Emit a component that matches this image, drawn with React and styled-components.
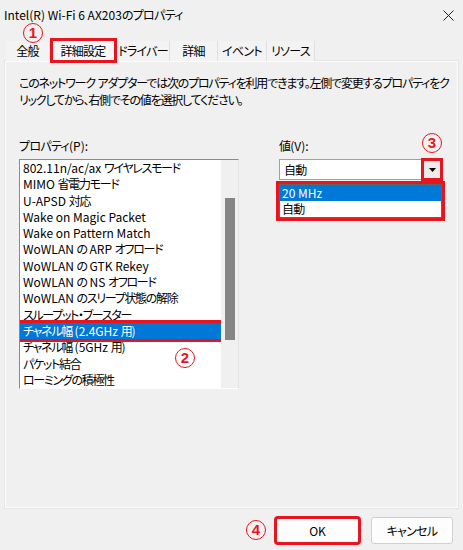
import styled, { createGlobalStyle } from 'styled-components';

const GlobalStyle = createGlobalStyle`
  html, body {
    margin: 0;
    padding: 0;
    background: #f0f0f0;
  }
  body {
    font-family: "Noto Sans CJK JP", "Noto Sans", sans-serif;
    font-feature-settings: "palt";
    font-size: 12px;
    color: #000;
  }
`;

const RED = '#e8141e';

const Page = styled.div`
  position: relative;
  width: 463px;
  height: 550px;
  background: #f0f0f0;
  display: flex;
  flex-direction: column;
  overflow: hidden;
`;

// kana / kanji runs are set tighter, like the narrow kana of the Windows UI font
const Jp = styled.span`
  letter-spacing: -0.7px;
`;

const TitleBar = styled.div`
  height: 30px;
  display: flex;
  align-items: center;
  justify-content: space-between;
  padding: 0 9px 0 4px;
  flex-shrink: 0;
`;

const Title = styled.span`
  font-size: 12px;
  line-height: 16px;
`;

const TabStrip = styled.div`
  height: 24px;
  margin-top: 7px;
  padding-left: 6px;
  display: flex;
  align-items: flex-end;
  flex-shrink: 0;
`;

const Tab = styled.div`
  height: ${p => (p.$active ? '19px' : '20px')};
  width: ${p => p.$w}px;
  box-sizing: border-box;
  display: flex;
  align-items: center;
  justify-content: center;
  white-space: nowrap;
  background: ${p => (p.$active ? '#f6f6f6' : '#f3f3f3')};
  border-right: 1px solid ${p => (p.$active ? 'transparent' : '#e0e0e0')};
  outline: ${p => (p.$active ? `3px solid ${RED}` : 'none')};
  margin: ${p => (p.$active ? '0 3px 1px 3px' : '0')};
  position: relative;
  z-index: ${p => (p.$active ? 1 : 0)};
  line-height: 16px;
`;

const Panel = styled.div`
  margin: 0 5px;
  height: 447px;
  box-sizing: border-box;
  border: 1px solid #fbfbfb;
  box-shadow: 0 0 0 1px #e6e6e6;
  padding: 12px 10px 0 13px;
  flex-shrink: 0;
`;

const Description = styled.p`
  margin: 0;
  line-height: 17px;
  white-space: nowrap;

  ${Jp} {
    letter-spacing: -1.2px;
  }
`;

const Columns = styled.div`
  display: grid;
  grid-template-columns: 220px 163px;
  column-gap: 40px;
  margin-top: 29px;
  align-items: start;
`;

const Column = styled.div`
  display: flex;
  flex-direction: column;
`;

const Label = styled.div`
  line-height: 17px;
  margin-bottom: 5px;
`;

const ListBox = styled.div`
  display: flex;
  height: 230px;
  box-sizing: border-box;
  border-top: 1px solid #8a8a8a;
  border-left: 1px solid #8a8a8a;
  border-right: 1px solid #e3e3e3;
  border-bottom: 1px solid #fdfdfd;
  background: #fff;
`;

const Items = styled.div`
  flex: 1;
  display: flex;
  flex-direction: column;
  overflow: hidden;
`;

const Item = styled.div`
  height: 16.3px;
  line-height: 16.3px;
  padding-left: 3px;
  white-space: nowrap;
  background: ${p => (p.$selected ? '#0078d7' : 'transparent')};
  color: ${p => (p.$selected ? '#fff' : '#000')};
  outline: ${p => (p.$selected ? `3px solid ${RED}` : 'none')};
  position: relative;
  z-index: ${p => (p.$selected ? 1 : 0)};

  ${Jp} {
    letter-spacing: -1.3px;
  }
`;

const ScrollTrack = styled.div`
  width: 17px;
  background: #f0f0f0;
  padding-top: 38px;
  display: flex;
  justify-content: center;
`;

const ScrollThumb = styled.div`
  width: 10px;
  height: 142px;
  background: #858585;
`;

const Combo = styled.div`
  height: 21px;
  box-sizing: border-box;
  border: 1px solid #a0a0a0;
  background: #fff;
  display: flex;
  align-items: center;
  justify-content: space-between;
  padding-left: 4px;
`;

const DropButton = styled.div`
  width: 16px;
  height: 17px;
  margin-right: 1px;
  background: #ececec;
  display: flex;
  align-items: center;
  justify-content: center;
  outline: 3px solid ${RED};
`;

const DropList = styled.div`
  margin-top: 4px;
  border: 1px solid #646464;
  background: #fff;
  outline: 3px solid ${RED};
  display: flex;
  flex-direction: column;
`;

const DropItem = styled.div`
  height: 16px;
  line-height: 16px;
  padding-left: 2px;
  background: ${p => (p.$selected ? '#0078d7' : '#fff')};
  color: ${p => (p.$selected ? '#fff' : '#000')};
`;

const Footer = styled.div`
  flex: 1;
  display: flex;
  align-items: center;
  justify-content: flex-end;
  padding: 2px 10px 0 0;
  gap: 11px;
`;

const FooterStep = styled.div`
  display: flex;
  align-items: center;
  gap: 9px;
`;

const Button = styled.button`
  width: ${p => (p.$default ? '85px' : '82px')};
  height: 27px;
  box-sizing: border-box;
  font: inherit;
  font-size: 12px;
  font-feature-settings: "palt";
  color: #000;
  background: #fdfdfd;
  border: 1px solid ${p => (p.$default ? '#0078d7' : '#d0d0d0')};
  border-radius: 3px;
  outline: ${p => (p.$default ? `3px solid ${RED}` : 'none')};
  outline-offset: -2px;
  padding: 0;
`;

const Badge = styled.span`
  width: 20px;
  height: 20px;
  box-sizing: border-box;
  border: 1.3px solid ${RED};
  border-radius: 50%;
  color: ${RED};
  font-family: "Liberation Sans", "Noto Sans", sans-serif;
  font-weight: bold;
  font-size: 15px;
  line-height: 18px;
  display: inline-flex;
  align-items: center;
  justify-content: center;
  flex-shrink: 0;
`;

const FloatingBadge = styled(Badge)`
  position: absolute;
  left: ${p => p.$x - 10}px;
  top: ${p => p.$y - 10}px;
  z-index: 3;
`;

const JP_RUN = /([\u3000-\u30ff\u4e00-\u9fff\uff00-\uffef]+)/;

function T({ children }) {
  return String(children)
    .split(JP_RUN)
    .map((s, i) => (i % 2 ? <Jp key={i}>{s}</Jp> : s));
}

const properties = [
  '802.11n/ac/ax ワイヤレスモード',
  'MIMO 省電力モード',
  'U-APSD 対応',
  'Wake on Magic Packet',
  'Wake on Pattern Match',
  'WoWLAN の ARP オフロード',
  'WoWLAN の GTK Rekey',
  'WoWLAN の NS オフロード',
  'WoWLAN のスリープ状態の解除',
  'スループット・ブースター',
  'チャネル幅 (2.4GHz 用)',
  'チャネル幅 (5GHz 用)',
  'パケット結合',
  'ローミングの積極性',
];

const tabs = [
  { label: '全般', w: 44 },
  { label: '詳細設定', w: 61, active: true },
  { label: 'ドライバー', w: 53 },
  { label: '詳細', w: 48 },
  { label: 'イベント', w: 49 },
  { label: 'リソース', w: 48 },
];

function CloseIcon() {
  return (
    <svg width="11" height="11" viewBox="0 0 11 11">
      <path d="M0.5 0.5 L10.5 10.5 M10.5 0.5 L0.5 10.5" stroke="#222" strokeWidth="1" fill="none" />
    </svg>
  );
}

function Arrow() {
  return (
    <svg width="7" height="4" viewBox="0 0 7 4">
      <path d="M0 0 H7 L3.5 4 Z" fill="#000" />
    </svg>
  );
}

export default function App() {
  return (
    <>
      <GlobalStyle />
      <Page>
        <TitleBar>
          <Title><T>Intel(R) Wi-Fi 6 AX203のプロパティ</T></Title>
          <CloseIcon />
        </TitleBar>

        <TabStrip>
          {tabs.map(t => (
            <Tab key={t.label} $w={t.w} $active={t.active}><T>{t.label}</T></Tab>
          ))}
        </TabStrip>

        <Panel>
          <Description>
            <T>このネットワーク アダプターでは次のプロパティを利用できます。左側で変更するプロパティをク</T>
            <br />
            <T>リックしてから、右側でその値を選択してください。</T>
          </Description>

          <Columns>
            <Column>
              <Label><T>プロパティ(P):</T></Label>
              <ListBox>
                <Items>
                  {properties.map((p, i) => (
                    <Item key={p} $selected={i === 10}><T>{p}</T></Item>
                  ))}
                </Items>
                <ScrollTrack>
                  <ScrollThumb />
                </ScrollTrack>
              </ListBox>
            </Column>

            <Column>
              <Label><T>値(V):</T></Label>
              <Combo>
                <span><T>自動</T></span>
                <DropButton>
                  <Arrow />
                </DropButton>
              </Combo>
              <DropList>
                <DropItem $selected>20 MHz</DropItem>
                <DropItem><T>自動</T></DropItem>
              </DropList>
            </Column>
          </Columns>
        </Panel>

        <Footer>
          <FooterStep>
            <Badge>4</Badge>
            <Button $default>OK</Button>
          </FooterStep>
          <Button><T>キャンセル</T></Button>
        </Footer>

        <FloatingBadge $x={33} $y={33}>1</FloatingBadge>
        <FloatingBadge $x={185} $y={358}>2</FloatingBadge>
        <FloatingBadge $x={432} $y={143}>3</FloatingBadge>
      </Page>
    </>
  );
}
